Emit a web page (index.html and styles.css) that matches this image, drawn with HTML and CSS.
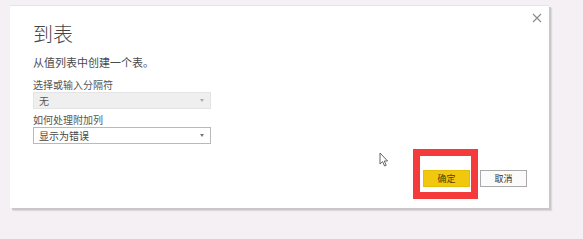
FILE: index.html
```html
<!DOCTYPE html>
<html lang="zh">
<head>
<meta charset="utf-8">
<link rel="stylesheet" href="styles.css">
</head>
<body>
<div class="dialog">
  <div class="close" aria-label="关闭">
    <svg width="10" height="10" viewBox="0 0 10 10"><path d="M1 1L9 9M9 1L1 9" stroke="#8a8a8a" stroke-width="1.1" fill="none"/></svg>
  </div>
  <h1 class="title">到表</h1>
  <p class="desc">从值列表中创建一个表。</p>
  <div class="label">选择或输入分隔符</div>
  <div class="select disabled"><span>无</span><i class="arrow"></i></div>
  <div class="label label2">如何处理附加列</div>
  <div class="select"><span>显示为错误</span><i class="arrow"></i></div>
  <div class="footer">
    <div class="okwrap">
      <button class="btn ok">确定</button>
      <div class="highlight"></div>
    </div>
    <button class="btn cancel">取消</button>
  </div>
  <svg class="cursor" width="10" height="15" viewBox="0 0 10 15"><path d="M1 1L1 12L3.6 9.6L5.6 14L7.2 13.3L5.3 9L8.6 9Z" fill="#fff" stroke="#555" stroke-width="0.9" stroke-linejoin="round"/></svg>
</div>
</body>
</html>
```
FILE: styles.css
```css
html, body {
  margin: 0;
  padding: 0;
  background: #f4f0f3;
  font-family: "Noto Sans CJK SC", "Noto Sans", sans-serif;
  color: #333;
}
body {
  width: 583px;
  height: 239px;
  overflow: hidden;
  padding-top: 5px;
  box-sizing: border-box;
}
.dialog {
  position: relative;
  width: 539px;
  height: 203px;
  margin-left: 10px;
  background: #fff;
  border-top: 1px solid #e6e2e5;
  box-shadow: 2px 2px 0 #c9c7c9, 3px 3px 1px #dcdadc;
  box-sizing: border-box;
  padding: 16px 22px 0 23px;
}
.close {
  position: absolute;
  right: 7px;
  top: 7px;
  width: 10px;
  height: 10px;
  line-height: 0;
}
.title {
  margin: 0;
  font-size: 20px;
  line-height: 24px;
  font-weight: 300;
  color: #444;
}
.desc {
  margin: 9px 0 0;
  font-size: 11px;
  line-height: 14px;
  color: #4a4a4a;
}
.label {
  margin-top: 9px;
  font-size: 10px;
  line-height: 13px;
  color: #555;
}
.label2 {
  margin-top: 4px;
}
.select {
  margin-top: 1px;
  width: 178px;
  height: 17px;
  box-sizing: border-box;
  border: 1px solid #b9b9b9;
  background: #fff;
  display: flex;
  align-items: center;
  justify-content: space-between;
  padding: 0 6px 0 5px;
  font-size: 10px;
  color: #444;
}
.select.disabled {
  background: #efefef;
  border-color: #e4e4e4;
  color: #555;
}
.arrow {
  width: 0;
  height: 0;
  border-left: 2.5px solid transparent;
  border-right: 2.5px solid transparent;
  border-top: 3px solid #777;
}
.select.disabled .arrow {
  border-top-color: #aaa;
}
.footer {
  margin-top: 26px;
  display: flex;
  justify-content: flex-end;
  gap: 10px;
}
.okwrap {
  position: relative;
}
.btn {
  width: 47px;
  height: 17px;
  font-family: inherit;
  font-size: 9px;
  line-height: 15px;
  padding: 0;
  color: #333;
  display: block;
}
.ok {
  background: #f2c80f;
  border: 1px solid #e5bc06;
  color: #4a3d00;
}
.cancel {
  background: #fbfbfb;
  border: 1px solid #a9a9a9;
}
.highlight {
  position: absolute;
  left: -10px;
  top: -21px;
  width: 65px;
  height: 50px;
  box-sizing: border-box;
  border: 7px solid #f43a3a;
  pointer-events: none;
}
.cursor {
  position: absolute;
  left: 369px;
  top: 146px;
}
```
